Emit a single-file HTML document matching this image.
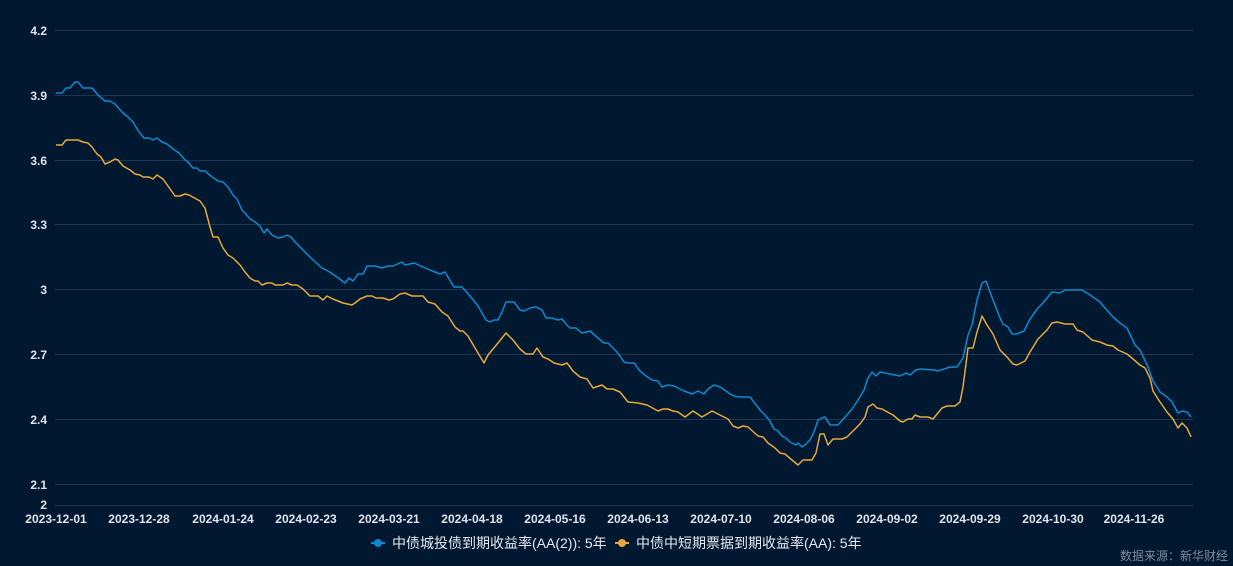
<!DOCTYPE html>
<html><head><meta charset="utf-8"><style>
html,body{margin:0;padding:0;background:#001931;}
body{width:1233px;height:566px;overflow:hidden;position:relative;font-family:"Liberation Sans","Noto Sans CJK SC",sans-serif;}
svg{position:absolute;left:0;top:0}
</style></head><body>
<svg width="1233" height="566" viewBox="0 0 1233 566">
<g stroke="#1e3450" stroke-width="1">
<line x1="55" y1="30.5" x2="1193" y2="30.5"/>
<line x1="55" y1="95.5" x2="1193" y2="95.5"/>
<line x1="55" y1="160.5" x2="1193" y2="160.5"/>
<line x1="55" y1="224.5" x2="1193" y2="224.5"/>
<line x1="55" y1="289.5" x2="1193" y2="289.5"/>
<line x1="55" y1="354.5" x2="1193" y2="354.5"/>
<line x1="55" y1="419.5" x2="1193" y2="419.5"/>
<line x1="55" y1="484.5" x2="1193" y2="484.5"/>
<line x1="55" y1="505.5" x2="1193" y2="505.5"/>
</g>
<g font-size="12" font-weight="bold" fill="#dfe3ea" text-anchor="end">
<text x="47" y="35">4.2</text><text x="47" y="100">3.9</text><text x="47" y="165">3.6</text>
<text x="47" y="229">3.3</text><text x="47" y="294">3</text><text x="47" y="359">2.7</text>
<text x="47" y="424">2.4</text><text x="47" y="489">2.1</text><text x="47" y="509">2</text>
</g>
<g font-size="12" font-weight="bold" fill="#dfe3ea" text-anchor="middle">
<text x="56" y="523">2023-12-01</text><text x="139" y="523">2023-12-28</text><text x="223" y="523">2024-01-24</text>
<text x="306" y="523">2024-02-23</text><text x="389" y="523">2024-03-21</text><text x="472" y="523">2024-04-18</text>
<text x="555" y="523">2024-05-16</text><text x="638" y="523">2024-06-13</text><text x="721" y="523">2024-07-10</text>
<text x="804" y="523">2024-08-06</text><text x="887" y="523">2024-09-02</text><text x="970" y="523">2024-09-29</text>
<text x="1053" y="523">2024-10-30</text><text x="1134" y="523">2024-11-26</text>
</g>
<polyline fill="none" stroke="#0b8ad0" stroke-width="1.5" stroke-linejoin="round" points="56,93 62,93 66,88 70,88 75,82 78,82 83,88 92,88 98,95 105,101 110,101 115,104 123,113 128,117 133,122 139,132 144,138 149,138 153,140 157,138 162,142 167,144 173,149 179,153 185,160 188,162 193,168 197,168 200,171 205,171 212,177 218,181 223,182 228,187 233,195 237,199 242,210 245,213 250,219 255,222 260,226 264,233 267,229 272,235 278,238 283,237 287,235 291,237 295,242 300,247 312,259 322,268 328,271 337,277 345,283 349,278 353,281 358,274 363,274 367,266 375,266 382,268 388,266 393,266 402,262 405,265 414,263 430,270 440,274 445,272 454,287 462,287 470,296 478,306 486,320 490,322 494,320 498,320 502,312 506,302 514,302 520,310 524,311 530,308 536,307 542,310 546,318 552,318 558,320 562,319 566,324 570,328 576,328 582,333 590,331 598,338 604,343 608,343 616,351 620,356 624,362 628,363 634,363 640,371 646,376 652,380 658,381 662,387 668,385 674,386 684,391 692,394 698,391 704,394 708,389 714,385 720,387 726,391 730,394 734,396 740,397 750,397 754,402 760,410 765,415 770,421 774,429 778,431 782,436 786,438 790,442 796,445 798,443 802,447 806,444 810,440 814,432 818,420 822,418 825,417 830,425 838,425 846,416 852,409 858,400 864,390 868,378 872,372 876,376 880,372 900,376 906,373 910,375 916,370 920,369 934,370 938,371 944,369 950,367 957,367 963,358 968,335 972,325 977,300 982,283 986,281 993,300 1000,318 1003,324 1008,327 1012,334 1017,334 1024,331 1030,319 1038,308 1043,303 1052,292 1060,293 1065,290 1082,290 1090,295 1100,302 1105,308 1113,317 1120,323 1127,328 1135,345 1140,350 1148,367 1153,381 1160,392 1167,397 1172,402 1178,413 1182,411 1187,412 1191,417"/>
<polyline fill="none" stroke="#e8a93a" stroke-width="1.5" stroke-linejoin="round" points="56,145 62,145 66,140 78,140 83,142 88,143 92,147 97,154 101,157 105,164 110,162 115,159 118,160 123,166 130,170 135,174 140,175 143,177 149,177 153,179 157,175 163,179 168,186 175,196 180,196 185,194 189,195 200,201 205,208 210,227 213,237 218,237 223,248 228,255 233,258 240,265 245,272 250,278 255,281 258,281 262,285 267,283 272,283 275,285 283,285 287,283 292,285 297,285 303,289 310,296 318,296 323,300 327,296 333,299 343,303 352,305 355,303 360,299 367,296 372,296 376,298 383,298 389,300 393,299 400,294 405,293 412,296 423,296 428,302 435,304 442,312 448,316 455,327 460,331 463,331 468,336 478,353 484,363 488,355 493,349 498,343 506,333 513,340 520,349 526,354 533,354 537,348 543,357 548,359 554,363 562,365 567,363 573,371 580,377 587,379 593,388 602,385 607,389 613,389 620,392 628,402 638,403 647,405 658,411 663,409 668,409 673,411 678,412 685,417 693,411 702,417 712,411 720,415 728,419 733,426 738,428 743,426 748,427 758,436 763,437 768,443 775,448 780,453 785,454 792,460 798,465 803,460 812,460 816,453 820,434 824,434 828,445 833,439 842,439 847,437 853,431 860,424 865,417 868,407 873,404 877,408 882,409 893,415 900,421 903,422 908,419 912,419 915,415 920,417 928,417 933,419 942,408 947,406 955,406 960,402 963,387 968,348 973,348 977,332 982,316 987,325 993,334 1000,350 1007,357 1013,364 1017,365 1025,361 1030,352 1038,339 1047,330 1052,323 1057,322 1065,324 1073,324 1077,330 1083,332 1092,340 1100,342 1107,345 1113,346 1118,350 1127,354 1133,359 1140,365 1145,368 1150,378 1153,391 1160,402 1167,412 1173,419 1178,428 1182,423 1187,428 1191,437"/>
<line x1="371" y1="543" x2="385" y2="543" stroke="#0b8ad0" stroke-width="2"/>
<circle cx="378" cy="543" r="4" fill="#0b8ad0"/>
<text x="392" y="548" font-size="14" fill="#e6e9ef">中债城投债到期收益率(AA(2)): 5年</text>
<line x1="615" y1="543" x2="629" y2="543" stroke="#e8a93a" stroke-width="2"/>
<circle cx="622" cy="543" r="4" fill="#e8a93a"/>
<text x="636" y="548" font-size="14" fill="#e6e9ef">中债中短期票据到期收益率(AA): 5年</text>
<text x="1228" y="560" font-size="12" fill="#7f8a99" text-anchor="end">数据来源：新华财经</text>
</svg>
</body></html>
